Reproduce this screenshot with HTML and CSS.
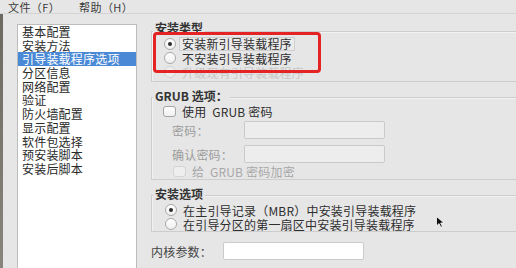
FILE: index.html
```html
<!DOCTYPE html>
<html lang="zh-CN">

<head>
    <meta charset="UTF-8">
    <title>引导装载程序选项</title>
    <link rel="stylesheet" href="styles.css">
</head>

<body>
    <div class="menubar">
        <span class="menu-item">文件（F）</span>
        <span class="menu-item">帮助（H）</span>
    </div>

    <div class="main">
        <div class="edge"></div>

        <ul class="nav-list">
            <li>基本配置</li>
            <li>安装方法</li>
            <li class="active">引导装载程序选项</li>
            <li>分区信息</li>
            <li>网络配置</li>
            <li>验证</li>
            <li>防火墙配置</li>
            <li>显示配置</li>
            <li>软件包选择</li>
            <li>预安装脚本</li>
            <li>安装后脚本</li>
        </ul>

        <div class="content">
            <!-- 安装类型 -->
            <div class="group group-type">
                <div class="group-title">安装类型</div>
                <div class="opt first"><span class="radio checked"></span><span class="focus">安装新引导装载程序</span></div>
                <div class="opt"><span class="radio"></span><span>不安装引导装载程序</span></div>
                <div class="opt faint"><span class="radio"></span><span>升级现有引导装载程序</span></div>
                <div class="mark-box"></div>
            </div>

            <!-- GRUB 选项 -->
            <div class="group group-grub">
                <div class="group-title">GRUB 选项：</div>
                <div class="opt check-row"><span class="check"></span><span>使用&nbsp; GRUB 密码</span></div>
                <div class="field-row first">
                    <span class="field-label">密码：</span>
                    <span class="entry disabled"></span>
                </div>
                <div class="field-row">
                    <span class="field-label">确认密码：</span>
                    <span class="entry disabled"></span>
                </div>
                <div class="opt check-row sub disabled"><span class="check"></span><span>给&nbsp; GRUB 密码加密</span></div>
            </div>

            <!-- 安装选项 -->
            <div class="group group-opts">
                <div class="group-title">安装选项</div>
                <div class="opt first"><span class="radio checked"></span><span>在主引导记录（MBR）中安装引导装载程序</span></div>
                <div class="opt"><span class="radio"></span><span>在引导分区的第一扇区中安装引导装载程序</span></div>
                <svg class="cursor" width="9" height="12" viewBox="0 0 9 12">
                    <path d="M0.5 0.5 L0.5 10 L3 7.6 L4.8 11.3 L6.4 10.6 L4.7 7 L8 7 Z" fill="#111" stroke="#fff" stroke-width="0.8"/>
                </svg>
            </div>

            <div class="kernel-row">
                <span class="field-label">内核参数：</span>
                <span class="entry"></span>
            </div>
        </div>
    </div>
</body>

</html>
```

FILE: styles.css
```css
/* 基本布局 */
body {
    margin: 0;
    width: 516px;
    height: 268px;
    overflow: hidden;
    background: #e6e6e6;
    font-family: 'Noto Sans CJK SC', 'Noto Sans', sans-serif;
    font-size: 12px;
    color: #2e2e2e;
}

.menubar {
    height: 14px;
    box-sizing: border-box;
    padding: 1px 0 0 8px;
    line-height: 12px;
    font-size: 11px;
    letter-spacing: 0.4px;
    border-bottom: 1px solid #d4d4d4;
    display: flex;
    gap: 19px;
    color: #3a3a3a;
}

.main {
    display: flex;
    height: 254px;
    overflow: hidden;
}

.edge {
    width: 3px;
    background: linear-gradient(180deg, #6e6862 0%, #8a847e 100%);
}

/* 左侧列表 */
.nav-list {
    list-style: none;
    margin: 10px 0 0 14px;
    padding: 0;
    width: 120px;
    height: 300px;
    box-sizing: border-box;
    background: #ffffff;
    border: 1px solid #bcbcbc;
    border-bottom: none;
}

.nav-list li {
    height: 13.7px;
    line-height: 13.7px;
    padding-left: 4px;
    letter-spacing: 0.2px;
    white-space: nowrap;
    color: #2a2a2a;
}

.nav-list li.active {
    background: #4a89d6;
    color: #ffffff;
}

/* 右侧内容 */
.content {
    flex: 1;
    margin-left: 14px;
    margin-right: -30px;
    padding-top: 17px;
}

.group {
    position: relative;
    border: 1px solid #cdcdcd;
    border-right: none;
    box-shadow: inset 1px 1px 0 #f2f2f2;
}

.group-title {
    width: fit-content;
    margin: -11px 0 0 1px;
    padding: 0 2px;
    line-height: 14px;
    background: #e6e6e6;
    font-weight: bold;
    color: #333333;
}

.opt {
    display: flex;
    align-items: center;
    height: 14px;
    padding-left: 12px;
    letter-spacing: 0.2px;
    white-space: nowrap;
}

.opt .radio,
.opt .check {
    margin-right: 6px;
}

.opt.first {
    margin-top: 2px;
}

.group-type {
    padding-bottom: 2px;
}

.focus {
    border: 1px solid #cfcfcf;
    background: #ebebeb;
    padding: 0 2px;
    margin-left: -3px;
    line-height: 12px;
}

.disabled {
    color: #a8a8a8;
}

.faint {
    color: #c6c6c6;
}

.radio {
    width: 10px;
    height: 10px;
    border-radius: 50%;
    border: 1px solid #a9a9a9;
    background: linear-gradient(180deg, #ffffff 0%, #efefef 100%);
    display: inline-flex;
    align-items: center;
    justify-content: center;
    flex-shrink: 0;
}

.radio.checked::after {
    content: "";
    width: 4px;
    height: 4px;
    border-radius: 50%;
    background: #2b2b2b;
}

.opt.disabled .check,
.opt.faint .radio {
    border-color: #d4d4d4;
    background: #eeeeee;
}

.check {
    width: 11px;
    height: 9px;
    border: 1px solid #a4a4a4;
    border-radius: 3px;
    background: linear-gradient(180deg, #ffffff 0%, #f0f0f0 100%);
    flex-shrink: 0;
}

/* 标注框 */
.mark-box {
    position: absolute;
    left: 1px;
    top: 0;
    width: 168px;
    height: 41px;
    box-sizing: border-box;
    border: 3px solid #e42424;
    border-radius: 4px;
}

/* GRUB 选项 */
.group-grub {
    margin-top: 15px;
    padding-bottom: 1px;
}

.group-grub .group-title {
    margin-top: -9px;
}

.check-row {
    padding-left: 11px;
    margin-top: 1px;
}

.check-row.sub {
    padding-left: 21px;
    margin-top: 2px;
    height: 13px;
}

.field-row {
    display: flex;
    align-items: center;
    padding-left: 20px;
    margin-top: 6px;
    height: 18px;
}

.field-row.first {
    margin-top: 3px;
}

.field-label {
    width: 72px;
    color: #9c9c9c;
    letter-spacing: 0.2px;
    flex-shrink: 0;
}

.entry {
    width: 141px;
    height: 18px;
    box-sizing: border-box;
    border: 1px solid #cbcbcb;
    border-radius: 2px;
    background: #ffffff;
}

.entry.disabled {
    background: #ededed;
    border-color: #cacaca;
}

/* 安装选项 */
.group-opts {
    margin-top: 15px;
}

.group-opts .group-title {
    margin-top: -9px;
}

.group-opts .opt {
    padding-left: 13px;
}

.cursor {
    position: absolute;
    left: 284px;
    top: 20px;
}

.kernel-row {
    display: flex;
    align-items: center;
    margin-top: 10px;
    height: 18px;
}

.kernel-row .field-label {
    color: #444444;
}
```
